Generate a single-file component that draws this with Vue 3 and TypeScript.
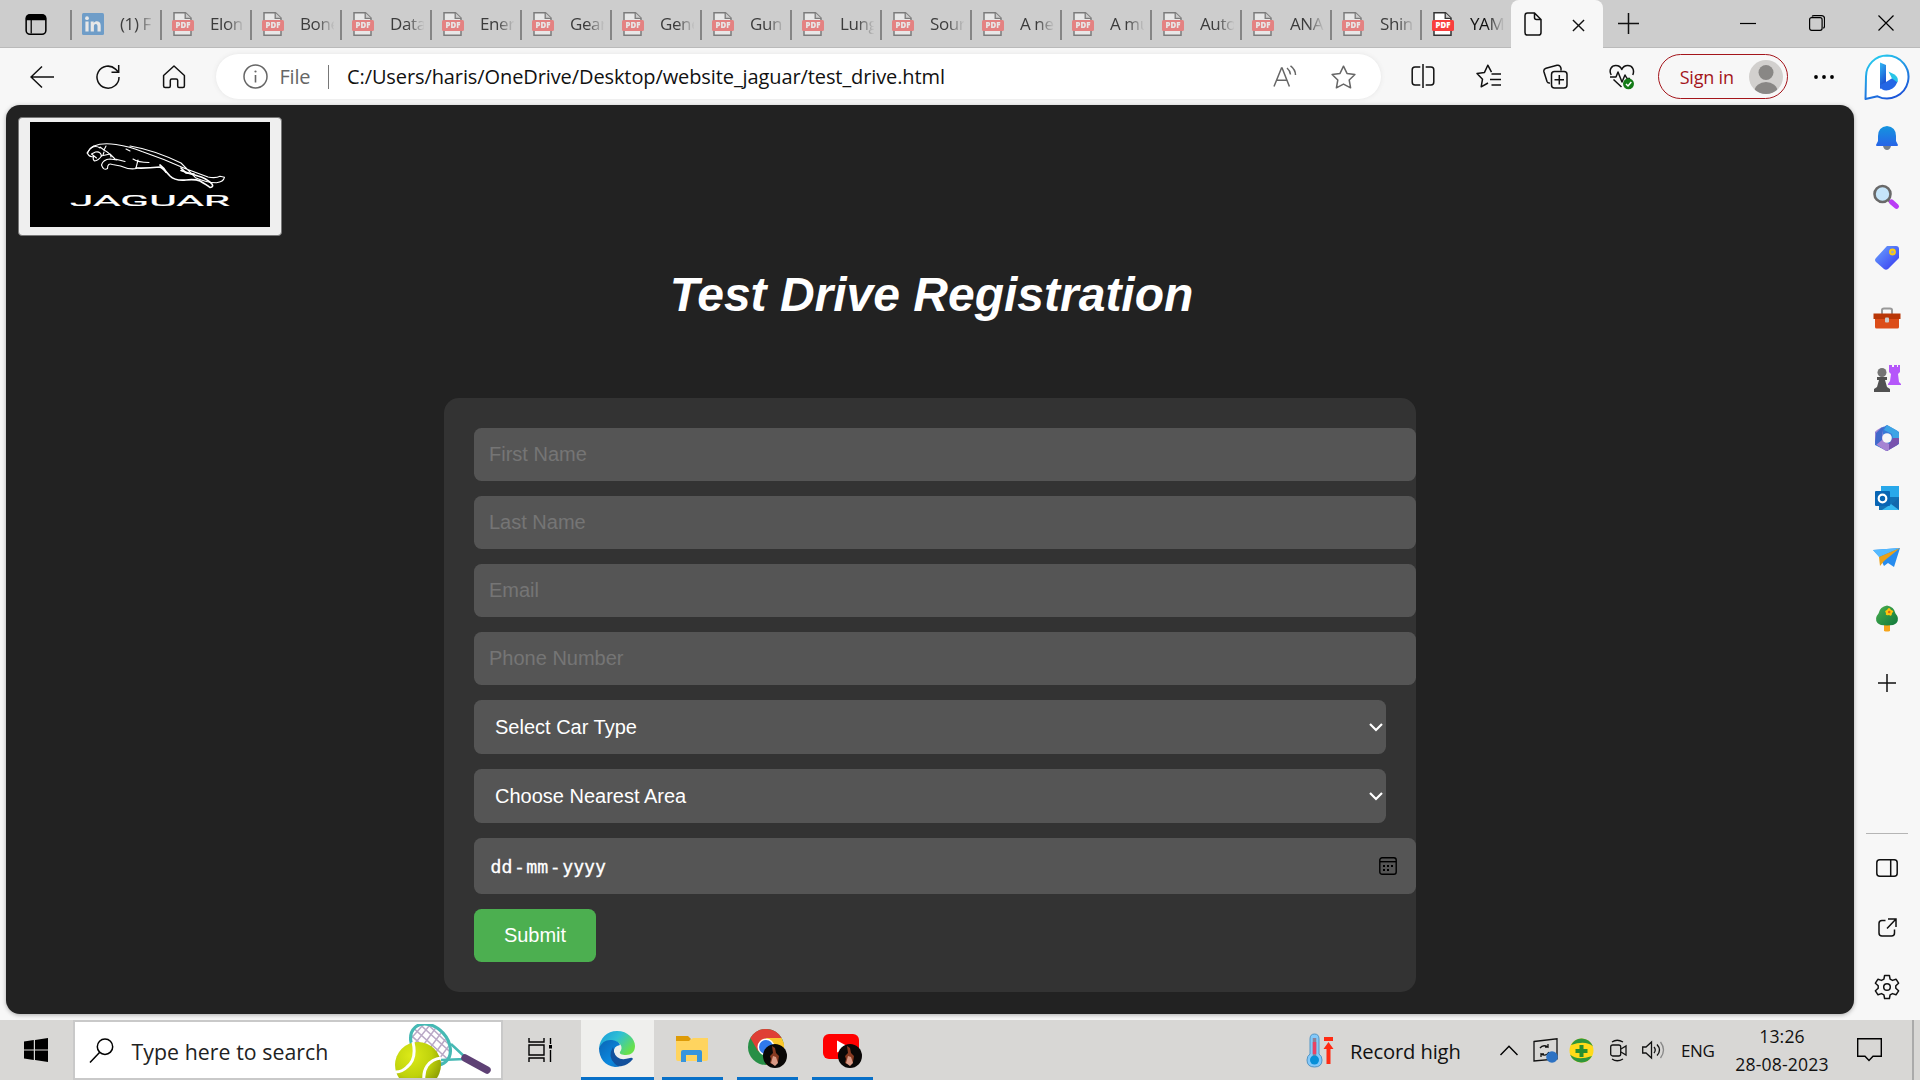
<script setup lang="ts">
interface Tab {
  label: string
  kind: 'linkedin' | 'pdf'
  awake?: boolean
}

const tabs: Tab[] = [
  { label: '(1) F', kind: 'linkedin' },
  { label: 'Elon', kind: 'pdf' },
  { label: 'Bone', kind: 'pdf' },
  { label: 'Data', kind: 'pdf' },
  { label: 'Ener', kind: 'pdf' },
  { label: 'Gear', kind: 'pdf' },
  { label: 'Gene', kind: 'pdf' },
  { label: 'Gun', kind: 'pdf' },
  { label: 'Lung', kind: 'pdf' },
  { label: 'Sour', kind: 'pdf' },
  { label: 'A ne', kind: 'pdf' },
  { label: 'A mu', kind: 'pdf' },
  { label: 'Auto', kind: 'pdf' },
  { label: 'ANA', kind: 'pdf' },
  { label: 'Shin', kind: 'pdf' },
  { label: 'YAM', kind: 'pdf', awake: true },
]

const textFields: string[] = ['First Name', 'Last Name', 'Email', 'Phone Number']
const selects: string[] = ['Select Car Type', 'Choose Nearest Area']
</script>

<template>
  <div class="screen">
    <header class="tabstrip">
      <div class="tab-actions">
        <svg width="22" height="23" viewBox="0 0 23 23"><rect x="1.2" y="1.2" width="20.6" height="20.6" rx="4" fill="none" stroke="#000" stroke-width="1.6" /><path d="M1 7V5q0-4 4-4h13q4 0 4 4v2z" /><path d="M6.500 6v15" stroke="#000" stroke-width="1.3" /></svg>
      </div>
      <div v-for="tab in tabs" :key="tab.label" class="tab" :class="{ sleeping: !tab.awake }">
        <svg v-if="tab.kind === 'linkedin'" class="fav" width="22" height="22" viewBox="0 0 22 22"><rect width="22" height="22" rx="1.500" fill="#1a72c4" /><circle cx="5" cy="5.200" r="1.900" fill="#fff" /><path d="M3.400 8.500h3.200V18.500H3.400zM8.700 8.500h3v1.500c1.800-2.900 7-2.300 7 2.500v6h-3.200v-5.300c0-3-3.600-2.800-3.600 0v5.300H8.700z" fill="#fff" /></svg>
        <svg v-else class="fav" width="22" height="24" viewBox="0 0 22 24"><path d="M2 .8h11.500L19 6v17.200H2z" fill="#fff" stroke="#333" stroke-width="1.500" /><path d="M13.200.8V6.300H19" fill="#ccc" stroke="#333" stroke-width="1.300" /><rect y="8" width="22" height="11" rx="1.500" fill="#f93e3e" /><text x="11" y="16.400" text-anchor="middle" font-family="Open Sans, sans-serif" font-size="7.800" font-weight="800" fill="#fff">PDF</text></svg>
        <span class="tab-label">{{ tab.label }}</span>
      </div>
      <div class="tab-active">
        <svg width="18" height="24" viewBox="0 0 18 24"><path d="M3.500.9H10.500L17 7.500V20.500q0 2.600-2.500 2.600H3.500Q1 23.100 1 20.500V3.500Q1 .9 3.500.9zM10.500 1V5.500q0 2 2 2H17" fill="none" stroke="#111" stroke-width="1.500" /></svg>
        <svg class="tab-close" width="13" height="13" viewBox="0 0 14 14"><path d="M1 1l12 12M13 1L1 13" stroke="#111" stroke-width="1.500" /></svg>
      </div>
      <svg class="new-tab" width="21" height="21" viewBox="0 0 21 21"><path d="M0 10.500h21M10.500 0v21" stroke="#111" stroke-width="1.500" /></svg>
      <div class="window-buttons">
        <svg width="16" height="16" viewBox="0 0 16 16"><path d="M0 8.500h16" stroke="#000" stroke-width="1.200" /></svg>
        <svg width="16" height="16" viewBox="0 0 16 16"><rect x=".6" y="2.700" width="12.500" height="12.600" rx="2" fill="none" stroke="#000" stroke-width="1.200" /><path d="M3 1.600Q3.500.6 5 .6h7.500q3 0 3 3V11q0 1.800-1.300 2.200" fill="none" stroke="#000" stroke-width="1.200" /></svg>
        <svg width="16" height="16" viewBox="0 0 16 16"><path d="M.5.5l15 15M15.500.5l-15 15" stroke="#000" stroke-width="1.200" /></svg>
      </div>
    </header>

    <nav class="toolbar">
      <div class="tool"><svg width="24" height="24" viewBox="0 0 24 24"><path d="M24 12H1M12 1.500L1 12l11 10.500" class="ln" /></svg></div>
      <div class="tool"><svg width="24" height="24" viewBox="0 0 24 24"><path d="M23 12A11 11 0 1 1 19.500 4.100L22.500 7M22.700 0v7.200H15.500" class="ln" /></svg></div>
      <div class="tool"><svg width="24" height="24" viewBox="0 0 24 24"><path d="M1.600 10.500L12 1l10.400 9.500V21q0 1.500-1.500 1.500H17q-1.300 0-1.300-1.500V15.500q0-1.500-1.500-1.500H9.800q-1.500 0-1.500 1.500V21q0 1.500-1.300 1.500H3.100q-1.500 0-1.500-1.500z" class="ln" stroke-linejoin="round" /></svg></div>
      <div class="address">
        <svg width="25" height="25" viewBox="0 0 25 25"><circle cx="12.500" cy="12.500" r="11.500" fill="none" stroke="#666" stroke-width="1.500" /><path d="M12.500 11v7.500" stroke="#666" stroke-width="1.600" /><circle cx="12.500" cy="7.500" r="1.100" fill="#666" /></svg>
        <span class="scheme">File</span>
        <i class="address-rule"></i>
        <span class="url">C:/Users/haris/OneDrive/Desktop/website_jaguar/test_drive.html</span>
        <svg class="read" width="24" height="24" viewBox="0 0 24 24"><path d="M1 21.500L8.500 3h.6l7.300 18.500M3.600 15.300H14M14 3q3 2.500 3.500 6.500M17.500.8Q22.500 4.500 22.500 10" fill="none" stroke="#666" stroke-width="1.500" /></svg>
        <svg class="star" width="25" height="24" viewBox="0 0 25 24"><path d="M12.500 1.200l3.500 7.200 7.900 1.100-5.700 5.500 1.400 7.800-7.100-3.700-7.100 3.700 1.400-7.800L1.100 9.500 9 8.400z" fill="none" stroke="#666" stroke-width="1.500" stroke-linejoin="round" /></svg>
      </div>
      <div class="tools-right">
        <div class="tool"><svg width="24" height="24" viewBox="0 0 24 24"><path d="M9.300 3H4Q1.200 3 1.200 6v12q0 3 2.800 3h5.300M14.700 3H20q2.800 0 2.800 3v12q0 3-2.800 3h-5.300M12 0v24" class="ln" /></svg></div>
        <div class="tool"><svg width="25" height="24" viewBox="0 0 25 24"><path d="M15.500 8.200L11.800 1.200 8.500 8.400 1 9.500l5.500 5.700-1.300 7.600L12 19M15.500 10H25M14 15.500H25M15.500 21H25" class="ln" stroke-linejoin="round" /></svg></div>
        <div class="tool"><svg width="25" height="25" viewBox="0 0 25 25"><path d="M18 6.500V4.200Q17 .5 14 1.300L3 4.200Q.2 5 1 8l3 9.500q.8 2 3 1.500M8.500 10.500q0-3 3-3H21q3 0 3 3V21q0 3-3 3h-9.500q-3 0-3-3zM16.300 11v9.500M11.500 15.800H21" class="ln" /></svg></div>
        <div class="tool"><svg width="26" height="26" viewBox="0 0 26 26"><path d="M2.200 11C-.5 6 2.500 1.500 6.800 1.500c3 0 5 1.500 6 4 1-2.500 3-4 6-4 4.500 0 7 4.500 5 9.500M12.500 23l-8-7.500M1 13h6l2-5 4 10 3-7 2 3.500h3" class="ln" stroke-linejoin="round" /><circle cx="19.500" cy="19.800" r="5.500" fill="#137b17" /><path d="M17 20l2 2 3.300-4" fill="none" stroke="#fff" stroke-width="1.500" /></svg></div>
      </div>
      <div class="signin">
        <span>Sign in</span>
        <svg width="34" height="34" viewBox="0 0 34 34"><defs><clipPath id="avatar-clip"><circle cx="17" cy="17" r="17" /></clipPath></defs><circle cx="17" cy="17" r="17" fill="#d2d0ce" /><g clip-path="url(#avatar-clip)" fill="#898785"><circle cx="17" cy="12.500" r="7.500" /><ellipse cx="17" cy="31" rx="11.500" ry="9" /></g></svg>
      </div>
      <svg class="dots" width="20" height="4" viewBox="0 0 20 4"><circle cx="2" cy="2" r="1.900" /><circle cx="10" cy="2" r="1.900" /><circle cx="18" cy="2" r="1.900" /></svg>
      <svg class="bing" width="46" height="46" viewBox="0 0 46 46">
        <defs><linearGradient id="bing-ring" x1=".2" y1="0" x2=".7" y2="1"><stop offset="0" stop-color="#27cdee" /><stop offset="1" stop-color="#1b50d8" /></linearGradient><linearGradient id="bing-b" x1="0" y1="0" x2=".3" y2="1"><stop offset="0" stop-color="#31b9f5" /><stop offset="1" stop-color="#1a49ce" /></linearGradient></defs>
        <path d="M23 1.500a21.500 21.500 0 1 1-9.500 40.800L1.500 45 2 22.500A21 21 0 0 1 23 1.500z" fill="#fff" stroke="url(#bing-ring)" stroke-width="2" stroke-linejoin="round" />
        <path d="M16 8.500l6 2.500v19l-6 5z" fill="url(#bing-b)" /><path d="M16 31l6-3 6.500-4 5 3q-1 4.500-5 7.500-6 3.500-10.500.8Q16 34 16 31z" fill="#2466e5" /><path d="M24.500 17.500l6 3q4.500 3 3 8l-5.500-4z" fill="#27c5e8" />
      </svg>
    </nav>

    <div class="middle">
      <main class="page">
        <button class="logo" type="button">
          <svg width="240" height="105" viewBox="0 0 240 105">
            <rect width="240" height="105" />
            <g fill="none" stroke="#fff" stroke-width="1.100" stroke-linecap="round" stroke-linejoin="round">
              <path d="M57 31q3-5 7-7 8-3.500 22-1.500 14 2 26 7 22 7.500 43 17l23 8.500q8 1.500 12-.8l4.500 1q-1 5-8 5.500-10 0-21-5L151 41Q124 28 100 24" />
              <path d="M64 24q-5 2-6.500 7.500 2 4 6 3-1 3 1 4.500 4-.5 7-5-1-5-6-4l-4 2 5 4M61 26q5-3 9 0M70 25l4 3 2-4" />
              <path d="M74 28q7 4 7 7M71 34l9-2 5 5 10 2.500M87 38l-7-1q-7 .5-8.500 6 2 6 6 3.500 0-6 5-4l8 1.500q9 4 16 2.500M74 30l-1 3" />
              <path d="M96 27l4 2M106 46l2-8M103 37q5 3.500 16 3.500" />
              <path d="M106 46q10 .5 24-1 4 2 10 9 5 5 16 4 9-1 14 1 7 4 10 6.500 4-.5 2-3.500-6-6-14-8-10-3-17-5.500" stroke-width="1.600" />
              <path d="M130 43q4 3 6 7M151 46l5 5 8 1" stroke-width="1.700" />
            </g>
            <text x="40" y="84" textLength="160" lengthAdjust="spacingAndGlyphs" font-family="Roboto, sans-serif" font-size="15.500" fill="#fff" stroke="#fff" stroke-width=".2">JAGUAR</text>
          </svg>
        </button>
        <h1>Test Drive Registration</h1>
        <form class="card" @submit.prevent>
          <input v-for="name in textFields" :key="name" class="field wide" type="text" :placeholder="name" />
          <div v-for="name in selects" :key="name" class="field select">
            <span>{{ name }}</span>
            <svg width="14" height="9" viewBox="0 0 14 9"><path d="M1 1l6 6 6-6" fill="none" stroke="#fff" stroke-width="2.200" /></svg>
          </div>
          <div class="field date wide">
            <div class="date-parts"><span>dd</span><span>-</span><span>mm</span><span>-</span><span>yyyy</span></div>
            <svg width="18" height="18" viewBox="0 0 18 18"><rect x=".8" y=".8" width="16.400" height="16.400" rx="2.300" fill="none" stroke="#000" stroke-width="1.400" /><path d="M1 4.700h16" stroke="#000" stroke-width="1.400" /><path d="M4 8h2v2H4zM8 8h2v2H8zM12 8h2v2h-2zM4 12h2v2H4zM8 12h2v2H8z" /></svg>
          </div>
          <button class="submit" type="submit">Submit</button>
        </form>
      </main>

      <aside class="sidebar">
        <svg width="28" height="28" viewBox="0 0 28 28"><defs><linearGradient id="bell" x1="0" y1="0" x2="0" y2="1"><stop offset="0" stop-color="#1495df" /><stop offset="1" stop-color="#2764e7" /></linearGradient></defs><path d="M10 22h8q-1 4-4 4t-4-4z" fill="#777f89" /><path d="M14 2q9 1 9 10v5l2 4q0 1-1 1H4q-1 0-1-1l2-4v-5q0-9 9-10z" fill="url(#bell)" /></svg>
        <svg width="28" height="28" viewBox="0 0 28 28"><path d="M15.500 16l3 3" stroke="#777" stroke-width="3" /><path d="M18.500 18l5 4.300" stroke="#ba3cf5" stroke-width="5" stroke-linecap="round" /><circle cx="9.500" cy="10" r="8" fill="#c5e5fa" stroke="#696969" stroke-width="2.600" /></svg>
        <svg width="28" height="28" viewBox="0 0 28 28"><defs><linearGradient id="tag" x1="0" y1="0" x2="1" y2="1"><stop offset="0" stop-color="#6ba6ff" /><stop offset="1" stop-color="#3535ef" /></linearGradient></defs><path d="M14 2h9q3 0 3 3v9L15 25q-2 1.500-4 0l-8-7q-2-2 0-4z" fill="url(#tag)" /><circle cx="19.500" cy="8" r="2.500" fill="#aaa" stroke="#ffcd0f" stroke-width="1.800" /></svg>
        <svg width="28" height="28" viewBox="0 0 28 28"><path d="M9 10V6q0-1.500 2-1.500h6q2 0 2 1.500v4" fill="none" stroke="#999" stroke-width="2" /><rect x="2" y="12" width="24" height="12.500" rx="1.500" fill="#dc4d19" /><path d="M.5 9.500H27.500V15H.5z" fill="#b93707" /><rect x="12" y="13.500" width="4" height="5" rx="1" fill="#ccc" /></svg>
        <svg width="28" height="28" viewBox="0 0 28 28"><path d="M16 1h3v2h2V1h3v2h1V1h2v7l-2 2 1 8 2 2v1H15v-1l2-3 1-7-2-2z" fill="#b557fa" /><circle cx="9" cy="8.500" r="4.500" fill="#747474" /><path d="M4 13h10v3h-2l2 7 3 2v3H1v-3l3-2 2-7H4z" fill="#515151" /></svg>
        <svg width="28" height="28" viewBox="0 0 28 28"><path d="M14 1l12 7v12l-12 7L2 21V8z" fill="#3979d7" /><path d="M14 1l10 5.500q2 1.200 2 3.500v9l-6-4-1-5-8-4z" fill="#3da4e5" /><path d="M26 14v4q0 2-2 3.200L14 27l-7-4 9-3 4-6z" fill="#7852ad" /><path d="M9 3L4 6Q2 7 2 10v8q0 2 2 3l9 6 3-1v-6l-6-4z" fill="#a583d3" /><path d="M11 2.500L9 9v7l-6 5q-1-1-1-3l1-9 5-5z" fill="#4169cb" /><circle cx="14" cy="14" r="4.800" fill="#f7f7f7" /></svg>
        <svg width="28" height="28" viewBox="0 0 28 28"><rect x="8" y="2" width="18" height="13" fill="#28a8ea" /><path d="M6 13h20v13H6z" fill="#1271b5" /><path d="M26 14v12H9l17-11z" fill="#35b9f1" /><path d="M18 20l8-6v12z" fill="#1268ad" /><rect x="2" y="7" width="15" height="15" rx="1" fill="#0865b4" /><circle cx="9.500" cy="14.500" r="3.800" fill="none" stroke="#fff" stroke-width="2.200" /></svg>
        <svg width="28" height="28" viewBox="0 0 28 28"><path d="M0 6l27-2-6 19-6-4-4 3-5-10z" fill="#278cee" /><path d="M27 4L0 6l6 7z" fill="#56baff" /><path d="M27 4L6 13l1 9 4-5z" fill="#eba117" /></svg>
        <svg class="tree" width="28" height="28" viewBox="0 0 28 28"><defs><linearGradient id="leaf" x1="0" y1="0" x2="1" y2="1"><stop offset="0" stop-color="#4cb04e" /><stop offset="1" stop-color="#10783c" /></linearGradient></defs><path d="M11 19h6v7q-3 1-6 0z" fill="#f6a51b" /><path d="M14 .5q7 1 8.500 8 4.500 5 1 9.500-2 2.500-9.500 2.500T4.500 18q-3.500-4.500 1-9.500Q7 1.500 14 .5z" fill="url(#leaf)" /><path d="M14 5q2-4 4 0 4 1 1 3 0 4-3 2-4 1-3-2-2-2 1-3z" fill="#ffc40d" /><circle cx="16.200" cy="7" r="1.300" fill="#df6717" /></svg>
        <svg class="add" width="18" height="18" viewBox="0 0 18 18"><path d="M0 9h18M9 0v18" stroke="#111" stroke-width="1.500" /></svg>
        <i class="side-rule"></i>
        <svg class="low" width="22" height="18" viewBox="0 0 22 18"><rect x=".8" y=".8" width="20.400" height="16.400" rx="3" class="ln" /><path d="M14.700 1v16" class="ln" /></svg>
        <svg class="low" width="19" height="19" viewBox="0 0 19 19"><path d="M7.500 2.500H4q-3 0-3 3V15q0 3 3 3h9.500q3 0 3-3v-3.500M10 1h8v8M18 1l-9 9.500" class="ln" /></svg>
        <svg class="low gear" width="26" height="26" viewBox="0 0 26 26"><path d="M10.600 1.500h4.800l.7 3.600 2.400 1.300 3.500-1.200 2.600 4-2.800 2.600v2.400l2.800 2.600-2.600 4-3.500-1.200-2.400 1.300-.7 3.600h-4.800l-.7-3.600-2.400-1.300L4 20.800l-2.600-4 2.800-2.600v-2.400L1.400 9.200l2.600-4 3.500 1.200 2.400-1.300z" class="ln" stroke-linejoin="round" /><circle cx="13" cy="13" r="3.300" class="ln" /></svg>
      </aside>
    </div>

    <footer class="taskbar">
      <div class="start"><svg width="24" height="24" viewBox="0 0 24 24"><path d="M0 3.500l9.800-1.400v9.300H0zM11 2l13-2v11.400H11zM0 12.600h9.800v9.300L0 20.500zM11 12.600h13V24l-13-2z" /></svg></div>
      <div class="search">
        <svg width="25" height="25" viewBox="0 0 25 25"><circle cx="16" cy="8.700" r="7.700" fill="none" stroke="#000" stroke-width="1.500" /><path d="M10.500 14.500L1 24.500" stroke="#000" stroke-width="1.500" /></svg>
        <span>Type here to search</span>
        <svg class="tennis" width="96" height="56" viewBox="0 0 96 56">
          <defs><radialGradient id="ball" cx=".35" cy=".3" r=".75"><stop offset="0" stop-color="#dcea18" /><stop offset=".6" stop-color="#bfd20c" /><stop offset="1" stop-color="#8a9b07" /></radialGradient>
            <clipPath id="head"><ellipse cx="35" cy="21" rx="16" ry="23" transform="rotate(-42 35 21)" /></clipPath></defs>
          <g clip-path="url(#head)" stroke="#b9a9c6" stroke-width="1.500"><path d="M8 4l44 40M14 0l44 40M20-4l44 40M2 8l44 40M26-6l40 38M54-2L22 42M60 2L28 46M48-6L16 38M42-8L10 32M36-8L4 28M64 8L36 46" /></g>
          <ellipse cx="35.500" cy="20.500" rx="17" ry="23" transform="rotate(-42 35.500 20.500)" fill="none" stroke="#46b9b4" stroke-width="3.200" />
          <path d="M56 20l15 14M46 36l24-1" stroke="#46b9b4" stroke-width="2.500" />
          <path d="M70 34l22 12" stroke="#5e4175" stroke-width="7.500" stroke-linecap="round" />
          <circle cx="23" cy="41" r="23" fill="url(#ball)" />
          <path d="M18 18q4 17-6 25-5 5-11 5M46 34q-9 1-14 8-4 6-3 14" fill="none" stroke="#fff" stroke-width="3" />
        </svg>
      </div>
      <div class="taskview"><svg width="24" height="24" viewBox="0 0 24 24"><path d="M1 0v4h15V0M1 24v-4h15v4M1 7h15v10H1zM22.500 0v6M22.500 12v12" fill="none" stroke="#000" stroke-width="1.400" /><rect x="21" y="7" width="3" height="3.500" /></svg></div>
      <div class="app current">
        <svg width="36" height="36" viewBox="0 0 36 36"><defs><linearGradient id="edge-top" x1="0" y1="0" x2="1" y2=".6"><stop offset="0" stop-color="#1597dc" /><stop offset=".5" stop-color="#2fc0d4" /><stop offset="1" stop-color="#68e14a" /></linearGradient><linearGradient id="edge-side" x1="0" y1="0" x2="1" y2="1"><stop offset="0" stop-color="#0b65b5" /><stop offset=".6" stop-color="#0b88de" /><stop offset="1" stop-color="#1666b5" /></linearGradient></defs>
          <path d="M0 17C1 7 8 0 18 0c11 0 18 8 18 15 0 6-4 9-9 9-4 0-7-1-6-3 4-5 0-11-8-11Q4 10 0 17z" fill="url(#edge-top)" /><path d="M0 17q4-9 13-8 7 1 8 5-7 1-6 8 2 9 13 8-5 6-12 6C6 35 0 27 0 17z" fill="url(#edge-side)" /><path d="M14 16q-6 10 2 17 3 3 7 2 6-1 11-7-1-2-3-1-13 4-16-6 0-2-1-5z" fill="#13509c" /></svg>
      </div>
      <div class="app">
        <svg width="32" height="28" viewBox="0 0 32 28"><path d="M0 1h12l3 3-3 4H0z" fill="#de9b07" /><path d="M0 6h13l4-3h15v21q0 2-2 2H2q-2 0-2-2z" fill="#ffd45f" /><path d="M5 27V17q0-2 2-2h17q2 0 2 2v10h-5v-7H10v7z" fill="#3795dc" /></svg>
      </div>
      <div class="app badged">
        <svg width="40" height="40" viewBox="0 0 40 40"><circle cx="18" cy="18" r="18" fill="#278f46" /><path d="M2.400 9A18 18 0 0 1 33.600 9H18z" fill="#df3f35" /><path d="M2.400 9l7.800 13.500L18 9z" fill="#df3f35" /><path d="M18 9h15.600A18 18 0 0 1 18 36l7.800-13.500z" fill="#fbc72d" /><circle cx="18" cy="18" r="8.500" fill="#fff" /><circle cx="18" cy="18" r="7" fill="#3079ec" /><circle cx="27" cy="27" r="12" fill="#0a0807" /><path d="M24 17l3 2 1 5 3 3-1 6-3 3-5-2 1-4-1-3 3-3z" fill="#873a21" /><path d="M25 27l3 1 2 6-3 3-4-3z" fill="#d99a86" /></svg>
      </div>
      <div class="app badged">
        <svg width="40" height="40" viewBox="0 0 40 40"><rect y="5" width="36" height="25" rx="6" fill="#f00" /><path d="M14 11.500v12L25 17.500z" fill="#fff" /><circle cx="27" cy="27" r="12" fill="#0a0807" /><path d="M24 17l3 2 1 5 3 3-1 6-3 3-5-2 1-4-1-3 3-3z" fill="#873a21" /><path d="M25 27l3 1 2 6-3 3-4-3z" fill="#d99a86" /></svg>
      </div>
      <div class="tray">
        <svg class="thermo" width="28" height="35" viewBox="0 0 28 35"><path d="M4 6q0-5 4.500-5T13 6v15q3 2 3 6 0 7-7.500 7T1 27q0-4 3-6z" fill="#83c9fa" stroke="#5294c4" /><path d="M8.500 5v20" stroke="#8d8298" stroke-width="3.500" /><path d="M8.500 9v12" stroke="#eb4164" stroke-width="3.500" /><circle cx="8.500" cy="27" r="4.500" fill="#078fd7" /><path d="M18 4h9v4h-9zM22.500 9l5 7h-3v15h-4V16h-3z" fill="#ff2b13" /></svg>
        <span class="weather">Record high</span>
        <svg class="chev" width="18" height="11" viewBox="0 0 18 11"><path d="M.5 10L9 1.200 17.500 10" fill="none" stroke="#000" stroke-width="1.400" /></svg>
        <svg class="sync" width="25" height="25" viewBox="0 0 25 25"><path d="M1 3.500L24 .8v20L1 23z" fill="none" stroke="#111" stroke-width="1.300" /><path d="M7 10q3-4 8-1V6M15 9h-3M16 14q-3 5-8 2v3M8 16h3" fill="none" stroke="#111" stroke-width="1.300" /><circle cx="19" cy="19" r="5.800" fill="#2d72c3" /></svg>
        <svg class="guard" width="25" height="25" viewBox="0 0 25 25"><circle cx="12.500" cy="12.500" r="12" fill="#ffdb19" /><path d="M2 7Q6 0 13 .5q8 .5 11 8Q17 2 2 7zM23 18q-4 7-11 6.500Q4 24 1 16.500 8 23 23 18z" fill="#2f963b" /><path d="M10.500 7h4v4h4v4h-4v4h-4v-4h-4v-4h4z" fill="#278f2e" /></svg>
        <svg class="cam" width="17" height="23" viewBox="0 0 17 23"><path d="M2 3q5-3.500 11 0M2 20q5 3.500 11 0" fill="none" stroke="#111" stroke-width="1.300" /><rect x=".7" y="6" width="10" height="11" rx="2" fill="none" stroke="#111" stroke-width="1.300" /><path d="M11 10l5-3v9l-5-3" fill="none" stroke="#111" stroke-width="1.300" /></svg>
        <svg class="vol" width="23" height="20" viewBox="0 0 23 20"><path d="M.7 7v6H4l5.500 5V2L4 7zM12 7q2.500 3 0 6M15 4.500q5 5.500 0 11" fill="none" stroke="#111" stroke-width="1.300" /><path d="M18.500 2q6 8 0 16" fill="none" stroke="#888" stroke-width="1.300" /></svg>
        <span class="lang">ENG</span>
        <div class="clock"><span>13:26</span><span>28-08-2023</span></div>
        <svg class="note" width="25" height="24" viewBox="0 0 25 24"><path d="M.7.7h23.600v17.600H16L12 22.500l-4-4.200H.7z" fill="none" stroke="#000" stroke-width="1.400" /></svg>
        <i class="peek"></i>
      </div>
    </footer>
  </div>
</template>

<style>
body { margin: 0; overflow: hidden; }
</style>

<style scoped>
* { box-sizing: border-box; }
svg { display: block; flex: none; }
.screen { width: 1920px; height: 1080px; display: flex; flex-direction: column; overflow: hidden; background: #f7f7f7; font-family: "Open Sans", "Noto Sans", sans-serif; color: #111; }
.ln { fill: none; stroke: #111; stroke-width: 1.5; }

.tabstrip { display: flex; height: 48px; flex: none; background: #cdcdcd; box-shadow: inset 0 -1px 0 #bababa; }
.tab-actions { width: 70px; padding: 12.5px 0 0 25px; }
.tab { display: flex; align-items: center; width: 90px; flex: none; position: relative; padding-left: 12px; }
.tab::before { content: ""; position: absolute; left: 0; top: 10px; width: 2px; height: 30px; background: #858585; }
.fav { width: 22px; }
.sleeping .fav { opacity: .52; }
.tab-label { width: 34px; margin-left: 16px; overflow: hidden; white-space: nowrap; font-size: 17px; line-height: 30px; letter-spacing: -.4px; color: #111; -webkit-mask-image: linear-gradient(90deg, #000 50%, transparent 102%); mask-image: linear-gradient(90deg, #000 50%, transparent 102%); }
.sleeping .tab-label { color: #3c3c3c; }
.tab-active { display: flex; align-items: center; width: 92px; flex: none; margin-left: 1px; padding-left: 12.5px; background: #f7f7f7; border-radius: 8px 8px 0 0; }
.tab-close { margin-left: 30.5px; margin-top: 2px; }
.new-tab { margin: 13px 0 0 14.5px; }
.window-buttons { display: flex; gap: 53px; margin: 15px 26.5px 0 auto; }

.toolbar { display: flex; align-items: center; height: 57px; flex: none; padding: 0 9px; }
.tool { width: 66px; display: flex; justify-content: center; flex: none; }
.tools-right { display: flex; margin-left: 9px; }
.tools-right .tool { width: 66.3px; }
.address { display: flex; align-items: center; width: 1165px; height: 45px; margin-left: 8.5px; flex: none; padding: 0 24.5px 0 27px; border-radius: 23px; background: #fff; box-shadow: 0 0 5px #e5e5e5; font-size: 20px; }
.scheme { margin-left: 12px; width: 30px; color: #666; letter-spacing: -.2px; }
.address-rule { width: 1.5px; height: 24px; margin-left: 18px; background: #777; }
.url { margin-left: 18px; white-space: nowrap; letter-spacing: -.1px; }
.read { margin-left: auto; }
.star { margin-left: 34.5px; }
.signin { display: flex; align-items: center; justify-content: space-between; width: 130px; height: 45px; flex: none; margin-left: 3px; padding: 0 4px 0 21px; border: 1.5px solid #a4151b; border-radius: 23px; color: #a4151b; font-size: 18px; letter-spacing: -.2px; white-space: nowrap; }
.dots { margin-left: 26px; }
.bing { margin: 0 1px 0 auto; }

.middle { display: flex; height: 915px; flex: none; padding-left: 6px; }
.page { width: 1848px; height: 909px; flex: none; display: flex; flex-direction: column; align-items: flex-start; padding: 12px 12px 0; border-radius: 14px; background: #222; box-shadow: 0 1px 4px #aaa; font-family: "Liberation Sans", Arial, sans-serif; }
.logo { width: 264px; height: 119px; padding: 4px 11px 8px; border: 1px solid #777; border-radius: 4px; background: #efefef; flex: none; }
h1 { align-self: center; margin: 31px 0 0 3px; font-size: 48px; line-height: 55px; font-style: italic; font-weight: bold; color: #fff; white-space: nowrap; }
.card { width: 972px; height: 594px; flex: none; margin: 76px 0 0 426px; padding: 30px; display: flex; flex-direction: column; align-items: flex-start; gap: 15px; border-radius: 15px; background: #333; }
.field { width: 912px; height: 54px; flex: none; border: 0; border-radius: 7.5px; background: #555; color: #fff; font: 20px "Liberation Sans", Arial, sans-serif; }
.wide { width: 942px; height: 53px; padding: 0 15px; }
.field::placeholder { color: #757575; opacity: 1; }
.select { display: flex; align-items: center; justify-content: space-between; padding: 0 3px 0 21px; }
.date { display: flex; align-items: center; justify-content: space-between; height: 56px; padding: 0 19px 0 16.5px; }
.date-parts { display: flex; gap: 1.5px; font: 18.2px "DejaVu Sans Mono", monospace; -webkit-text-stroke: .3px #fff; }
.submit { width: 122px; height: 53px; padding: 0; border: 0; border-radius: 7.5px; background: #4caf50; color: #fff; font: 20px "Liberation Sans", Arial, sans-serif; }

.sidebar { display: flex; flex-direction: column; align-items: center; width: 66px; padding-top: 19px; gap: 32px; }
.tree { margin-top: 1px; }
.sidebar .add { margin-top: 9px; }
.side-rule { width: 42px; height: 1px; margin-top: 109px; background: #b5b5b5; }
.side-rule + .low { margin-top: -7px; }
.sidebar .low { margin-bottom: 9px; }
.sidebar .gear { margin-top: -4px; }

.taskbar { display: flex; height: 60px; flex: none; background: #d8d7d5; }
.start { width: 72.5px; padding: 18px 0 0 24px; }
.search { display: flex; align-items: center; position: relative; width: 430.5px; padding-left: 14.5px; border: 2px solid #c9c9c9; background: #fff; font-size: 21.3px; color: #222; white-space: nowrap; overflow: hidden; }
.search span { margin: 2px 0 0 17.5px; letter-spacing: .05px; }
.tennis { position: absolute; left: 320px; top: 2px; }
.taskview { width: 78px; padding: 18px 0 0 24.5px; }
.app { display: flex; align-items: center; justify-content: center; width: 61px; height: 60px; margin-right: 14px; padding-right: 2px; border-bottom: 3px solid #0870c8; flex: none; }
.app.badged { padding-right: 0; }
.app.current { width: 73px; margin-right: 8px; background: #efefed; }
.tray { display: flex; align-items: center; margin-left: auto; white-space: nowrap; }
.thermo { margin-right: 16px; }
.weather { width: 112px; font-size: 20.2px; letter-spacing: -.15px; padding-top: 1px; }
.chev { margin-left: 38px; }
.sync { margin-left: 15px; }
.guard { margin-left: 11px; }
.cam { margin-left: 15.5px; }
.vol { margin-left: 15.5px; }
.lang { width: 35px; margin-left: 16px; font-size: 17px; letter-spacing: -.4px; }
.clock { display: flex; flex-direction: column; align-items: center; width: 94px; margin-left: 19px; font-size: 17.6px; line-height: 28.5px; letter-spacing: .15px; }
.note { margin-left: 28px; }
.peek { width: 2px; height: 60px; margin: 0 6px 0 30px; background: #aaa; }
</style>
